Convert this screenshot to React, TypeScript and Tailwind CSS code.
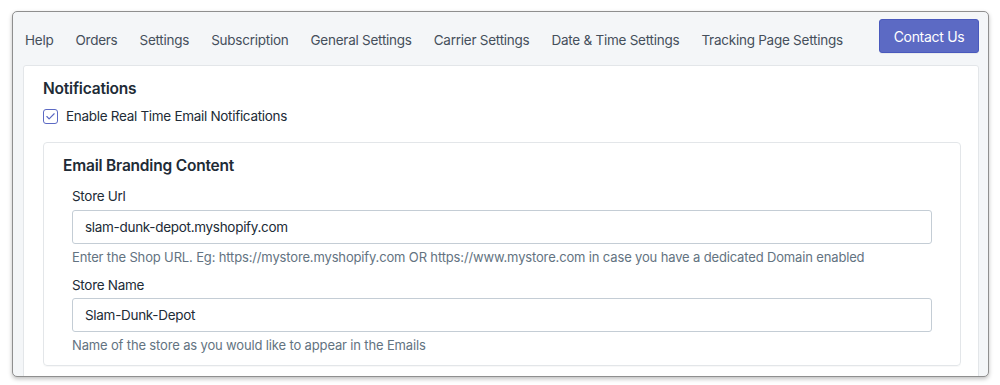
import { Check } from 'lucide-react';

const tabs = [
  'Help',
  'Orders',
  'Settings',
  'Subscription',
  'General Settings',
  'Carrier Settings',
  'Date & Time Settings',
  'Tracking Page Settings',
];

export default function App() {
  return (
    <div className="w-[1000px] h-[385px] bg-white pt-[11px] pl-[12px] pr-[11px] font-['Inter',sans-serif] overflow-hidden">
      {/* Window frame */}
      <div className="h-[366px] border border-[#8f8f8f] rounded-[5px] bg-[#f4f6f8] shadow-[0_2px_4px_rgba(0,0,0,0.25)] overflow-hidden">
        {/* Top nav */}
        <div className="flex items-center h-[53px] pl-[12px] pr-[9px]">
          <nav className="flex flex-1 items-center gap-[22px] pt-[3px] text-[13.5px] tracking-[-0.25px] text-[#454f5b] whitespace-nowrap">
            {tabs.map((tab) => (
              <span key={tab} className="cursor-pointer">
                {tab}
              </span>
            ))}
          </nav>
          <button className="h-[34px] w-[100px] -mt-[5px] rounded-[3px] bg-[#5c6ac4] border border-[#4959bd] text-white text-[14px] tracking-[-0.3px] shadow-[0_1px_0_rgba(22,29,37,0.05)]">
            Contact Us
          </button>
        </div>

        {/* Main card */}
        <div className="ml-[10px] mr-[9px] h-[320px] bg-white border border-[#e3e6e9] rounded-t-[3px] pl-[19px] pr-[17px] pt-[13px] text-[#212b36]">
          <h2 className="text-[15.5px] font-semibold tracking-[-0.2px] leading-[20px]">Notifications</h2>
          <label className="flex items-center gap-[8px] mt-[7px] text-[13.5px] tracking-[-0.3px]">
            <span className="w-[15px] h-[15px] rounded-[3px] border border-[#5c6ac4] flex items-center justify-center">
              <Check className="w-[11px] h-[11px] text-[#5c6ac4]" strokeWidth={2.5} />
            </span>
            Enable Real Time Email Notifications
          </label>

          {/* Email branding */}
          <div className="mt-[16px] border border-[#e3e6e9] rounded-[4px] pl-[19px] pr-[28px] pt-[13px] pb-[11px] shadow-[0_1px_1px_rgba(0,0,0,0.03)]">
            <h3 className="text-[15.5px] font-semibold tracking-[-0.2px] leading-[20px]">Email Branding Content</h3>
            <div className="pl-[9px]">
              <div className="mt-[11px] text-[13.5px] tracking-[-0.3px] leading-[18px]">Store Url</div>
              <div className="mt-[5px] h-[34px] border border-[#c4cdd5] rounded-[3px] flex items-center px-[12px] text-[13.5px] tracking-[-0.3px]">
                slam-dunk-depot.myshopify.com
              </div>
              <div className="mt-[4px] text-[13px] tracking-[-0.15px] text-[#637381] leading-[18px] whitespace-nowrap">
                Enter the Shop URL. Eg: https://mystore.myshopify.com OR https://www.mystore.com in case you have a dedicated Domain enabled
              </div>
              <div className="mt-[10px] text-[13.5px] tracking-[-0.3px] leading-[18px]">Store Name</div>
              <div className="mt-[4px] h-[34px] border border-[#c4cdd5] rounded-[3px] flex items-center px-[12px] text-[13.5px] tracking-[-0.3px]">
                Slam-Dunk-Depot
              </div>
              <div className="mt-[4px] text-[13px] tracking-[-0.15px] text-[#637381] leading-[18px]">
                Name of the store as you would like to appear in the Emails
              </div>
            </div>
          </div>
        </div>
      </div>
    </div>
  );
}
